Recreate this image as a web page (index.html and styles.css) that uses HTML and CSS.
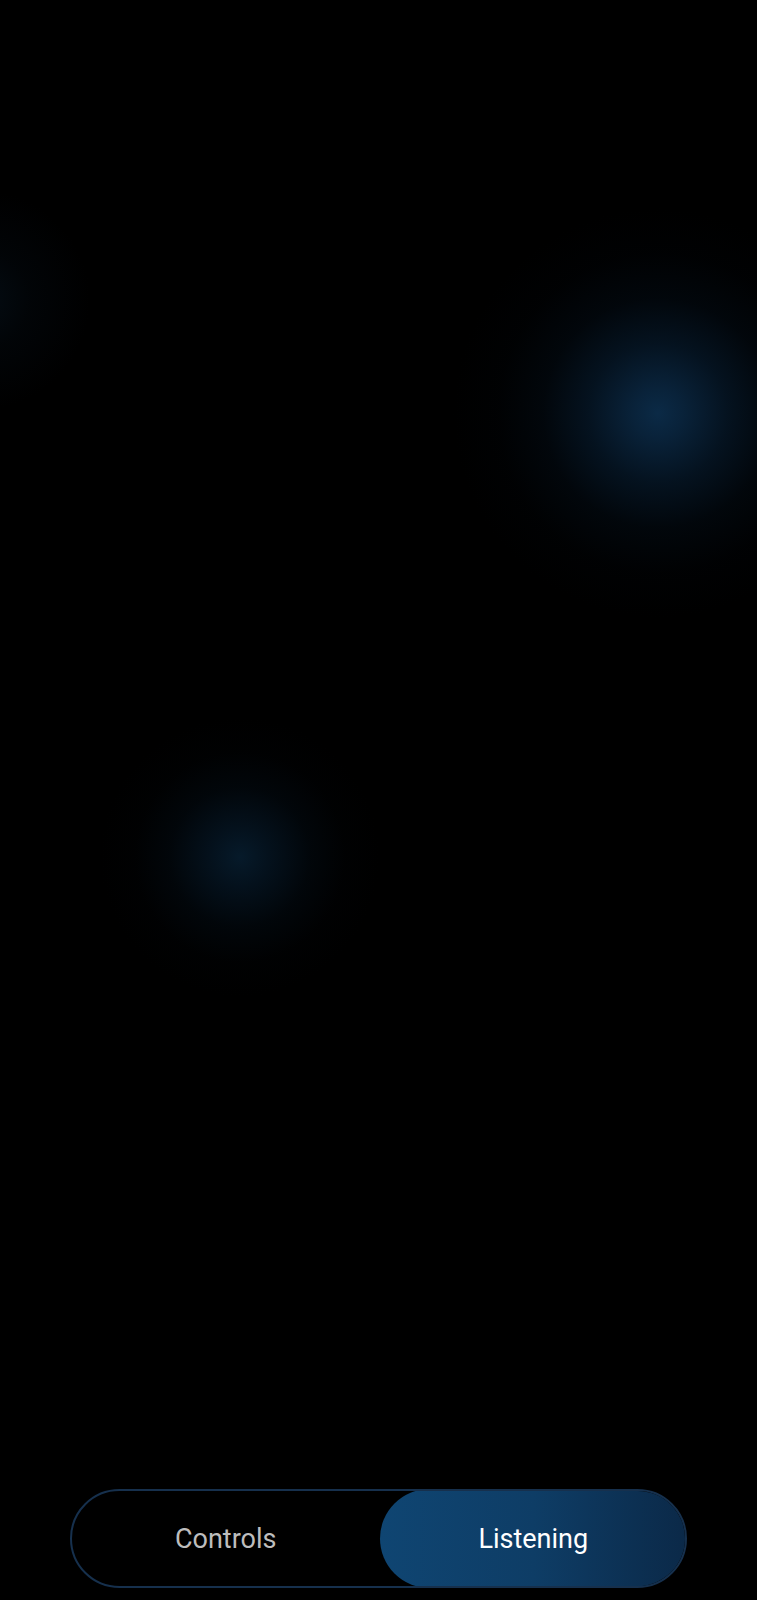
FILE: index.html
```html
<!DOCTYPE html>
<html lang="en">
<head>
<meta charset="utf-8">
<title>Listening</title>
<link rel="stylesheet" href="styles.css">
</head>
<body>
<div class="screen">
  <div class="toggle">
    <div class="seg">Controls</div>
    <div class="seg active">Listening</div>
  </div>
</div>
</body>
</html>
```

FILE: styles.css
```css
html, body {
  margin: 0;
  padding: 0;
  background: #000;
}
.screen {
  width: 757px;
  height: 1600px;
  display: flex;
  flex-direction: column;
  justify-content: flex-end;
  align-items: center;
  background:
    radial-gradient(circle at 658px 413px, rgba(11,42,70,1) 0px, rgba(10,38,64,0.9) 25px, rgba(7,28,48,0.65) 70px, rgba(4,16,28,0.4) 115px, rgba(2,8,15,0.18) 160px, rgba(0,0,0,0) 205px),
    radial-gradient(circle at 240px 857px, rgba(6,26,42,1) 0px, rgba(5,21,35,0.8) 30px, rgba(3,13,22,0.45) 70px, rgba(2,6,10,0.2) 105px, rgba(0,0,0,0) 140px),
    radial-gradient(circle at -20px 300px, rgba(4,12,19,1) 0px, rgba(3,8,13,0.55) 50px, rgba(0,0,0,0) 110px),
    #000;
}
.toggle {
  width: 617px;
  height: 99px;
  box-sizing: border-box;
  margin-bottom: 12px;
  border: 2px solid #16304d;
  border-radius: 50px;
  display: flex;
  overflow: hidden;
  font-family: Roboto, "Noto Sans", sans-serif;
  font-size: 27px;
}
.seg {
  flex: 1;
  display: flex;
  align-items: center;
  justify-content: center;
  color: #bdbdbd;
  border-radius: 50px;
}
.seg.active {
  color: #ffffff;
  background: linear-gradient(90deg, #0f4572 0%, #0e3d66 50%, #0b2948 100%);
  margin: -2px -2px -2px 0;
}
```
